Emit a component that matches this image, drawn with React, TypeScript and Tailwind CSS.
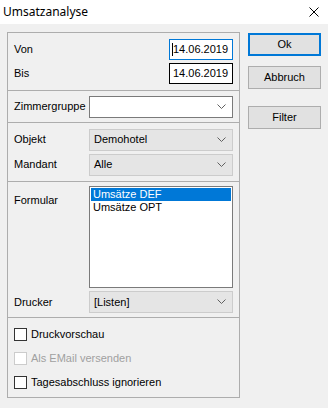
import React from "react";

const font = { fontFamily: '"Liberation Sans", Arial, sans-serif' };

function Chevron({ color = "#606060" }: { color?: string }) {
  return (
    <svg width="9" height="6" viewBox="0 0 9 6">
      <path d="M0.5 0.5 L4.5 4.5 L8.5 0.5" fill="none" stroke={color} strokeWidth="1" />
    </svg>
  );
}

function Combo({ value, ro }: { value: string; ro?: boolean }) {
  return (
    <div
      className={
        "w-[144px] h-[22px] flex items-center justify-between pl-[4px] pr-[6px] border " +
        (ro ? "bg-[#e5e5e5] border-[#cccccc]" : "bg-white border-[#7a7a7a]")
      }
    >
      <span className="text-[11px] text-black leading-none">{value}</span>
      <Chevron />
    </div>
  );
}

function Check({ label, disabled }: { label: string; disabled?: boolean }) {
  return (
    <div className="flex items-center gap-[4px] h-[13px]">
      <div
        className={
          "w-[13px] h-[13px] border bg-white " +
          (disabled ? "border-[#cccccc]" : "border-[#333333]")
        }
      />
      <span className={"text-[11px] leading-none " + (disabled ? "text-[#a0a0a0]" : "text-black")}>
        {label}
      </span>
    </div>
  );
}

function Btn({ label, def, extra = "" }: { label: string; def?: boolean; extra?: string }) {
  return (
    <div
      className={
        "w-[73px] h-[23px] flex items-center justify-center bg-[#e1e1e1] text-[11px] text-black " +
        (def ? "border-2 border-[#0078d7] " : "border border-[#adadad] ") +
        extra
      }
    >
      {label}
    </div>
  );
}

export default function App() {
  return (
    <div className="w-[328px] h-[408px] bg-[#f0f0f0] flex flex-col text-[11px]" style={font}>
      <div className="h-[24px] bg-white flex items-center justify-between pl-[3px] pr-[9px]">
        <span className="text-[12px] text-black" style={{ fontFamily: '"Noto Sans", sans-serif' }}>
          Umsatzanalyse
        </span>
        <svg width="10" height="10" viewBox="0 0 10 10">
          <path d="M0.5 0.5 L9.5 9.5 M9.5 0.5 L0.5 9.5" stroke="#000" strokeWidth="1" />
        </svg>
      </div>
      <div className="flex pl-[7px] pt-[8px] gap-[8px]">
        <div className="w-[233px] h-[366px] border border-[#adadad] flex flex-col">
          {/* Von / Bis */}
          <div className="h-[58px] border-b border-[#adadad] flex flex-col pt-[6px] pl-[6px] pr-[6px] gap-[3px]">
            <div className="flex items-center justify-between h-[21px]">
              <span>Von</span>
              <div className="w-[64px] h-[21px] border border-[#0078d7] bg-white flex items-center pl-[2px] text-[11px]">
                <span className="w-px h-[13px] bg-black" />
                14.06.2019
              </div>
            </div>
            <div className="flex items-center justify-between h-[21px]">
              <span>Bis</span>
              <div className="w-[64px] h-[21px] border border-black bg-white flex items-center pl-[3px] text-[11px]">
                14.06.2019
              </div>
            </div>
          </div>
          {/* Zimmergruppe */}
          <div className="h-[32px] border-b border-[#adadad] flex items-center justify-between pl-[6px] pr-[6px]">
            <span>Zimmergruppe</span>
            <Combo value="" />
          </div>
          {/* Objekt / Mandant */}
          <div className="h-[59px] border-b border-[#adadad] flex flex-col justify-center gap-[3px] pl-[6px] pr-[6px]">
            <div className="flex items-center justify-between">
              <span>Objekt</span>
              <Combo value="Demohotel" ro />
            </div>
            <div className="flex items-center justify-between">
              <span>Mandant</span>
              <Combo value="Alle" ro />
            </div>
          </div>
          {/* Formular / Drucker */}
          <div className="h-[136px] border-b border-[#adadad] flex flex-col pt-[4px] gap-[3px] pl-[6px] pr-[6px]">
            <div className="flex justify-between">
              <span className="pt-[6px]">Formular</span>
              <div className="w-[144px] h-[102px] border border-[#7a7a7a] bg-white p-[1px] flex flex-col">
                <div className="h-[13px] bg-[#0078d7] text-white text-[11px] leading-[13px] pl-[2px]">
                  Umsätze DEF
                </div>
                <div className="h-[13px] text-black text-[11px] leading-[13px] pl-[2px]">
                  Umsätze OPT
                </div>
              </div>
            </div>
            <div className="flex items-center justify-between">
              <span>Drucker</span>
              <Combo value="[Listen]" ro />
            </div>
          </div>
          {/* Checkboxes */}
          <div className="flex-1 flex flex-col pl-[6px] pt-[10px] gap-[11px]">
            <Check label="Druckvorschau" />
            <Check label="Als EMail versenden" disabled />
            <Check label="Tagesabschluss ignorieren" />
          </div>
        </div>
        <div className="flex flex-col gap-[10px] pt-[1px]">
          <Btn label="Ok" def />
          <Btn label="Abbruch" />
          <Btn label="Filter" extra="mt-[7px]" />
        </div>
      </div>
    </div>
  );
}
